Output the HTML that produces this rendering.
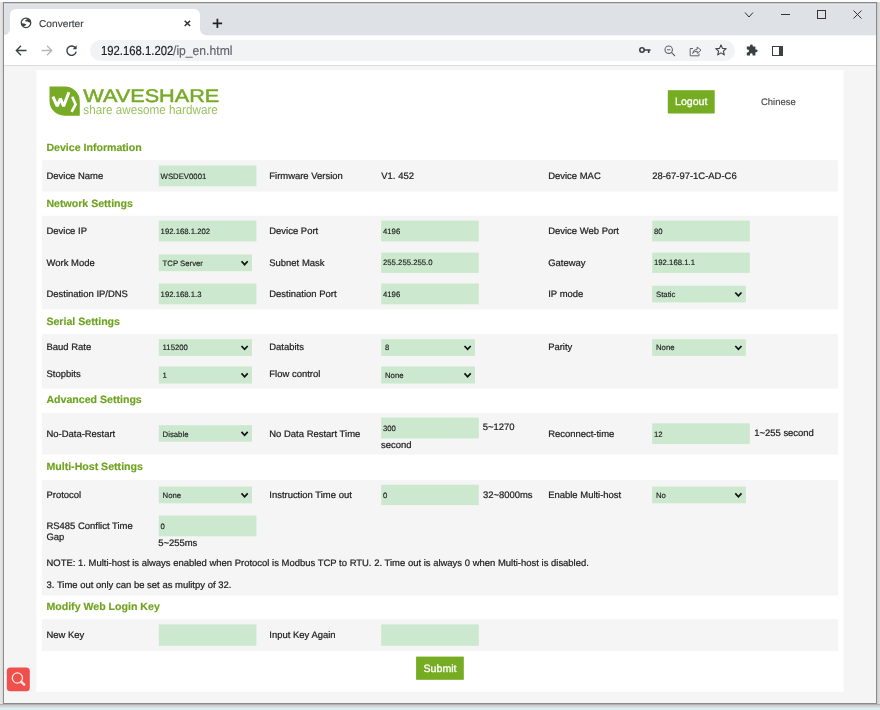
<!DOCTYPE html>
<html><head><meta charset="utf-8"><title>Converter</title>
<style>
html,body{margin:0;padding:0}
body{will-change:transform;text-rendering:geometricPrecision;width:880px;height:710px;position:relative;overflow:hidden;background:#ececee;font-family:"Liberation Sans",sans-serif;}
div,span{box-sizing:border-box}
.a{position:absolute;white-space:nowrap}
#desk-t{left:0;top:0;width:880px;height:2px;background:#fbfbfb}
#desk-l{left:0;top:2px;width:3px;height:702px;background:linear-gradient(to right,#e8e8e8,#d8d8d8)}
#desk-b{left:0;top:704px;width:880px;height:6px;background:linear-gradient(#b2aeb2 0,#b2aeb2 16.6%,#cdcdd1 16.7%,#cdcdd1 33.3%,#d2d4d8 33.4%,#d2d4d8 50%,#d8e4e8 50.1%,#d8e4e8 66.6%,#dceef2 66.7%,#dceef2 100%)}
#desk-r{left:877px;top:2px;width:3px;height:702px;background:linear-gradient(to right,#cacaca,#e0e0e0)}
#win{left:3px;top:2px;width:874px;height:702px;border:1px solid #8a8a8b;background:#f5f5f5;overflow:hidden}
#tabbar{left:4px;top:3px;width:872px;height:32px;background:linear-gradient(#c9cbcf 0,#c9cbcf 1px,#e7e8ec 1px,#e7e8ec 2px,#dee1e6 2px)}
#tabhalf{left:4px;top:35px;width:872px;height:1px;background:#f4f5f6}
.flare{width:6px;height:7px;top:29px;background:#fff}
.flare i{display:block;width:6px;height:6px;background:#dee1e6}
#tab{left:10px;top:8.5px;width:190px;height:27px;background:#fff;border-radius:6px 6px 0 0}
#toolbar{left:4px;top:36px;width:872px;height:29px;background:#fff}
#tbline{left:4px;top:65px;width:872px;height:1px;background:#dcdcdc}
#pill{left:90px;top:40px;width:645px;height:21px;border-radius:11px;background:#f1f3f4}
#bg{left:0;top:0}
.h{font-weight:bold;font-size:10.6px;line-height:14px;height:14px;color:#6fa31f;-webkit-text-stroke:0.15px #6fa31f}
.l{font-size:9.45px;line-height:12px;height:12px;word-spacing:0.07px;color:#222;-webkit-text-stroke:0.22px #222}
.t{font-size:7.75px;line-height:21px;height:21px;color:#1c1c1c;-webkit-text-stroke:0.15px #1c1c1c}
.btn{color:#fff;text-align:center;-webkit-text-stroke:0.3px #fff}
svg{display:block}
</style></head><body>

<div class="a" id="desk-t"></div><div class="a" id="desk-l"></div><div class="a" id="desk-b"></div><div class="a" id="desk-r"></div>
<div class="a" id="win"></div>
<div class="a" id="tabbar"></div><div class="a" id="tabhalf"></div><div class="a flare" style="left:4px"><i style="border-bottom-right-radius:6px"></i></div><div class="a flare" style="left:200px"><i style="border-bottom-left-radius:6px"></i></div><div class="a" id="tab"></div><div class="a" id="toolbar"></div><div class="a" id="tbline"></div><div class="a" id="pill"></div>
<svg class="a" style="left:20px;top:17px" width="12" height="12" viewBox="0 0 12 12"><defs><clipPath id="gc"><circle cx="6" cy="5.8" r="4.9"/></clipPath></defs><circle cx="6" cy="5.8" r="4.75" fill="#fff" stroke="#3c4043" stroke-width="1.25"/><g clip-path="url(#gc)" fill="#3c4043"><path d="M5.2 3.2L7 2.2L11 1.5V5.6L9 5.4L7.6 4.6L5.6 4.4Z"/><path d="M1 6.2L4.2 6.4L6.4 7.6L5.4 8.6L3.6 9.6L1 8.6Z"/></g></svg>
<div class="a" id="tabtitle" style="left:39px;top:18px;font-size:9.9px;line-height:14px;color:#3c4043;-webkit-text-stroke:0.15px #3c4043;transform:scaleX(1.03);transform-origin:0 50%">Converter</div>
<svg class="a" style="left:183px;top:18.5px" width="9" height="9" viewBox="0 0 9 9"><path d="M1.7 1.7L7.1 7.1M7.1 1.7L1.7 7.1" stroke="#2d3033" stroke-width="1.45" fill="none"/></svg>
<svg class="a" style="left:212px;top:17.5px" width="11" height="11" viewBox="0 0 11 11"><path d="M5.4 0.8V10M0.7 5.4H10.1" stroke="#202124" stroke-width="1.7" fill="none"/></svg>
<svg class="a" style="left:744px;top:11.5px" width="10" height="6" viewBox="0 0 10 6"><path d="M1 0.5L5 5L9 0.5" stroke="#333" stroke-width="1" fill="none"/></svg>
<div class="a" style="left:781px;top:14px;width:8.5px;height:1px;background:#333"></div>
<div class="a" style="left:817px;top:10px;width:9px;height:8.5px;border:1px solid #333"></div>
<svg class="a" style="left:853px;top:10px" width="9" height="9" viewBox="0 0 9 9"><path d="M0.5 0.5L8.5 8.5M8.5 0.5L0.5 8.5" stroke="#333" stroke-width="1" fill="none"/></svg>
<svg class="a" style="left:15px;top:45px" width="12" height="11" viewBox="0 0 12 11"><path d="M11.5 5.5H1.5M6 0.8L1.3 5.5L6 10.2" stroke="#3c4043" stroke-width="1.3" fill="none"/></svg>
<svg class="a" style="left:41px;top:45px" width="12" height="11" viewBox="0 0 12 11"><path d="M0.5 5.5H10.5M6 0.8L10.7 5.5L6 10.2" stroke="#b4b7ba" stroke-width="1.3" fill="none"/></svg>
<svg class="a" style="left:65px;top:44px" width="13" height="13" viewBox="0 0 13 13"><path d="M10.6 4.2A4.7 4.7 0 1 0 11.2 7.6" stroke="#3c4043" stroke-width="1.4" fill="none"/><path d="M11.6 1.2V5.2H7.6Z" fill="#3c4043"/></svg>
<div class="a" id="url" style="left:101px;top:42px;font-size:13px;line-height:17px;color:#202124;-webkit-text-stroke:0.2px #202124;transform:scaleX(.869);transform-origin:0 50%">192.168.1.202</div>
<div class="a" id="url2" style="left:172.6px;top:42px;font-size:13px;line-height:17px;color:#5f6368;-webkit-text-stroke:0.15px #5f6368;transform:scaleX(.935);transform-origin:0 50%">/ip_en.html</div>
<svg class="a" style="left:639px;top:46px" width="12" height="9" viewBox="0 0 12 9"><circle cx="3" cy="4" r="2.2" fill="none" stroke="#3c4043" stroke-width="1.6"/><path d="M5 4H11.5M9.7 4V7" stroke="#3c4043" stroke-width="1.7" fill="none"/></svg>
<svg class="a" style="left:664px;top:45px" width="12" height="12" viewBox="0 0 12 12"><circle cx="4.7" cy="4.7" r="3.7" fill="none" stroke="#5f6368" stroke-width="1.1"/><path d="M7.4 7.4L11 11M3 4.7H6.4" stroke="#5f6368" stroke-width="1.1" fill="none"/></svg>
<svg class="a" style="left:689px;top:44px" width="13" height="13" viewBox="0 0 13 13"><path d="M4 4.5H1.2V11.8H10V9.5" stroke="#5f6368" stroke-width="1" fill="none"/><path d="M3.6 9.4Q4 5.4 8.2 5.2V3L12 6.2L8.2 9.4V7.2Q5.6 7 3.6 9.4Z" stroke="#5f6368" stroke-width="1" fill="none" stroke-linejoin="round"/></svg>
<svg class="a" style="left:715px;top:44px" width="12" height="12" viewBox="0 0 12 12"><path d="M6 0.9L7.5 4.4L11.3 4.7L8.4 7.2L9.3 10.9L6 8.9L2.7 10.9L3.6 7.2L0.7 4.7L4.5 4.4Z" stroke="#3c4043" stroke-width="1.1" fill="none" stroke-linejoin="round"/></svg>
<svg class="a" style="left:745px;top:44px" width="13" height="13" viewBox="0 0 13 13"><path d="M5 1.8A1.4 1.4 0 0 1 7.8 1.8V2.6H10.4V5.4H11.2A1.4 1.4 0 0 1 11.2 8.2H10.4V11.4H7.6V10.6A1.3 1.3 0 0 0 5 10.6V11.4H1.8V8.4H2.6A1.3 1.3 0 0 0 2.6 5.6H1.8V2.6H5Z" fill="#3c4043"/></svg>
<div class="a" style="left:772px;top:46px;width:11px;height:10px;border:1.5px solid #3c4043;border-right-width:4.5px"></div>
<svg class="a" id="bg" width="880" height="710" viewBox="0 0 880 710">
<rect x="36.2" y="70.1" width="807.4" height="621.7" fill="#fff"/>
<rect x="667.8" y="90.2" width="46.9" height="23.3" fill="#76ac21"/>
<rect x="42" y="160.10" width="796" height="31.50" fill="#f5f5f5"/>
<rect x="158.8" y="165.50" width="97.6" height="20.80" fill="#cce8ce"/>
<rect x="42" y="215.80" width="796" height="93.60" fill="#f5f5f5"/>
<rect x="158.8" y="220.60" width="97.6" height="20.80" fill="#cce8ce"/>
<rect x="381.2" y="220.60" width="97.6" height="20.80" fill="#cce8ce"/>
<rect x="652.2" y="220.60" width="97.6" height="20.80" fill="#cce8ce"/>
<rect x="158.8" y="254.50" width="93.2" height="16.70" fill="#cce8ce"/>
<path d="M241.50 261.25L244.60 264.65L247.70 261.25" stroke="#111" stroke-width="1.7" fill="none"/>
<rect x="381.2" y="252.60" width="97.6" height="20.30" fill="#cce8ce"/>
<rect x="652.2" y="252.60" width="97.6" height="20.30" fill="#cce8ce"/>
<rect x="158.8" y="283.50" width="97.6" height="20.80" fill="#cce8ce"/>
<rect x="381.2" y="283.50" width="97.6" height="20.80" fill="#cce8ce"/>
<rect x="652.2" y="285.70" width="93.6" height="16.70" fill="#cce8ce"/>
<path d="M735.30 292.45L738.40 295.85L741.50 292.45" stroke="#111" stroke-width="1.7" fill="none"/>
<rect x="42" y="334.10" width="796" height="54.50" fill="#f5f5f5"/>
<rect x="158.8" y="339.20" width="93.2" height="16.70" fill="#cce8ce"/>
<path d="M241.50 345.95L244.60 349.35L247.70 345.95" stroke="#111" stroke-width="1.7" fill="none"/>
<rect x="381.2" y="339.20" width="93.8" height="16.70" fill="#cce8ce"/>
<path d="M464.50 345.95L467.60 349.35L470.70 345.95" stroke="#111" stroke-width="1.7" fill="none"/>
<rect x="652.2" y="339.20" width="93.6" height="16.70" fill="#cce8ce"/>
<path d="M735.30 345.95L738.40 349.35L741.50 345.95" stroke="#111" stroke-width="1.7" fill="none"/>
<rect x="158.8" y="366.50" width="93.2" height="17.00" fill="#cce8ce"/>
<path d="M241.50 373.40L244.60 376.80L247.70 373.40" stroke="#111" stroke-width="1.7" fill="none"/>
<rect x="381.2" y="366.50" width="93.8" height="17.00" fill="#cce8ce"/>
<path d="M464.50 373.40L467.60 376.80L470.70 373.40" stroke="#111" stroke-width="1.7" fill="none"/>
<rect x="42" y="413.00" width="796" height="41.60" fill="#f5f5f5"/>
<rect x="158.8" y="425.20" width="93.2" height="16.50" fill="#cce8ce"/>
<path d="M241.50 431.85L244.60 435.25L247.70 431.85" stroke="#111" stroke-width="1.7" fill="none"/>
<rect x="381.2" y="417.60" width="97.6" height="20.80" fill="#cce8ce"/>
<rect x="652.2" y="423.30" width="97.6" height="20.80" fill="#cce8ce"/>
<rect x="42" y="479.90" width="796" height="115.70" fill="#f5f5f5"/>
<rect x="158.8" y="486.60" width="93.2" height="16.70" fill="#cce8ce"/>
<path d="M241.50 493.35L244.60 496.75L247.70 493.35" stroke="#111" stroke-width="1.7" fill="none"/>
<rect x="381.2" y="484.70" width="97.6" height="20.40" fill="#cce8ce"/>
<rect x="652.2" y="486.60" width="93.6" height="16.70" fill="#cce8ce"/>
<path d="M735.30 493.35L738.40 496.75L741.50 493.35" stroke="#111" stroke-width="1.7" fill="none"/>
<rect x="158.8" y="515.50" width="97.6" height="20.80" fill="#cce8ce"/>
<rect x="42" y="619.20" width="796" height="31.80" fill="#f5f5f5"/>
<rect x="158.8" y="624.40" width="97.6" height="21.40" fill="#cce8ce"/>
<rect x="381.2" y="624.40" width="97.6" height="21.40" fill="#cce8ce"/>
<rect x="416.1" y="656.6" width="47.7" height="23.2" fill="#76ac21"/>
</svg>
<svg class="a" id="logo" style="left:49px;top:86px" width="174" height="32" viewBox="0 0 174 32">
<path d="M0.5 0.4H15.8A15 15 0 0 1 30.8 15.4V29.7H15.5A15 15 0 0 1 0.5 14.7Z" fill="#77ab26"/>
<path d="M3.9 10.6L8.2 20.2L11.4 12.6L14.6 20.2L19.9 6.2" stroke="#fff" stroke-width="3" fill="none" stroke-linejoin="miter" stroke-miterlimit="2" stroke-linecap="butt"/>
<path d="M23.2 10.8L26.6 18.4L22.6 25.8" stroke="#fff" stroke-width="2.6" fill="none" stroke-linejoin="miter"/>
<text id="ws1" x="34.3" y="15.8" font-family="Liberation Sans, sans-serif" font-size="18.2" fill="#77ab26" stroke="#77ab26" stroke-width="0.5" textLength="136" lengthAdjust="spacingAndGlyphs">WAVESHARE</text>
<text id="ws2" x="34.3" y="27.7" font-family="Liberation Sans, sans-serif" font-size="12.8" fill="#77ab26" fill-opacity="0.75" textLength="134.5" lengthAdjust="spacingAndGlyphs">share awesome hardware</text>
</svg>
<div class="a btn" id="logout" style="left:667.8px;top:95px;width:46.9px;height:14px;font-size:10.6px;line-height:14px">Logout</div>
<div class="a l" id="chinese" style="left:761px;top:97px;color:#4a4a4a;-webkit-text-stroke:0.15px #4a4a4a">Chinese</div>
<div class="a h m" style="left:46.4px;top:141px">Device Information</div>
<div class="a l m" style="left:46.5px;top:171px">Device Name</div>
<div class="a t" style="left:160.6px;top:166px">WSDEV0001</div>
<div class="a l m" style="left:269.3px;top:171px">Firmware Version</div>
<div class="a l m" style="left:381.3px;top:171px">V1. 452</div>
<div class="a l m" style="left:548.2px;top:171px">Device MAC</div>
<div class="a l m" style="left:652.2px;top:171px">28-67-97-1C-AD-C6</div>
<div class="a h m" style="left:46.4px;top:197px">Network Settings</div>
<div class="a l m" style="left:46.5px;top:226px">Device IP</div>
<div class="a t" style="left:160.6px;top:221px">192.168.1.202</div>
<div class="a l m" style="left:269.3px;top:226px">Device Port</div>
<div class="a t" style="left:383.0px;top:221px">4196</div>
<div class="a l m" style="left:548.2px;top:226px">Device Web Port</div>
<div class="a t" style="left:654.0px;top:221px">80</div>
<div class="a l m" style="left:46.5px;top:258px">Work Mode</div>
<div class="a t" style="left:162.6px;top:253px">TCP Server</div>
<div class="a l m" style="left:269.3px;top:258px">Subnet Mask</div>
<div class="a t" style="left:383.0px;top:252px">255.255.255.0</div>
<div class="a l m" style="left:548.2px;top:258px">Gateway</div>
<div class="a t" style="left:654.0px;top:252px">192.168.1.1</div>
<div class="a l m" style="left:46.5px;top:289px">Destination IP/DNS</div>
<div class="a t" style="left:160.6px;top:284px">192.168.1.3</div>
<div class="a l m" style="left:269.3px;top:289px">Destination Port</div>
<div class="a t" style="left:383.0px;top:284px">4196</div>
<div class="a l m" style="left:548.2px;top:289px">IP mode</div>
<div class="a t" style="left:656.0px;top:284px">Static</div>
<div class="a h m" style="left:46.4px;top:315px">Serial Settings</div>
<div class="a l m" style="left:46.5px;top:342px">Baud Rate</div>
<div class="a t" style="left:162.6px;top:337px">115200</div>
<div class="a l m" style="left:269.3px;top:342px">Databits</div>
<div class="a t" style="left:385.0px;top:337px">8</div>
<div class="a l m" style="left:548.2px;top:342px">Parity</div>
<div class="a t" style="left:656.0px;top:337px">None</div>
<div class="a l m" style="left:46.5px;top:369px">Stopbits</div>
<div class="a t" style="left:162.6px;top:365px">1</div>
<div class="a l m" style="left:269.3px;top:369px">Flow control</div>
<div class="a t" style="left:385.0px;top:365px">None</div>
<div class="a h m" style="left:46.4px;top:393px">Advanced Settings</div>
<div class="a l m" style="left:46.5px;top:429px">No-Data-Restart</div>
<div class="a t" style="left:162.6px;top:424px">Disable</div>
<div class="a l m" style="left:269.3px;top:429px">No Data Restart Time</div>
<div class="a t" style="left:383.0px;top:418px">300</div>
<div class="a l m" style="left:482.8px;top:422px">5~1270</div>
<div class="a l m" style="left:381.0px;top:440px">second</div>
<div class="a l m" style="left:548.2px;top:429px">Reconnect-time</div>
<div class="a t" style="left:654.0px;top:424px">12</div>
<div class="a l m" style="left:754.2px;top:428px">1~255 second</div>
<div class="a h m" style="left:46.4px;top:460px">Multi-Host Settings</div>
<div class="a l m" style="left:46.5px;top:490px">Protocol</div>
<div class="a t" style="left:162.6px;top:485px">None</div>
<div class="a l m" style="left:269.3px;top:490px">Instruction Time out</div>
<div class="a t" style="left:383.0px;top:485px">0</div>
<div class="a l m" style="left:483.0px;top:490px">32~8000ms</div>
<div class="a l m" style="left:548.2px;top:490px">Enable Multi-host</div>
<div class="a t" style="left:656.0px;top:485px">No</div>
<div class="a l m" style="left:46.5px;top:521px">RS485 Conflict Time</div>
<div class="a l m" style="left:46.5px;top:532px">Gap</div>
<div class="a t" style="left:160.6px;top:516px">0</div>
<div class="a l m" style="left:158.2px;top:538px">5~255ms</div>
<div class="a l m" style="left:46.5px;top:558px">NOTE: 1. Multi-host is always enabled when Protocol is Modbus TCP to RTU. 2. Time out is always 0 when Multi-host is disabled.</div>
<div class="a l m" style="left:46.5px;top:580px">3. Time out only can be set as mulitpy of 32.</div>
<div class="a h m" style="left:46.4px;top:600px">Modify Web Login Key</div>
<div class="a l m" style="left:46.5px;top:630px">New Key</div>
<div class="a l m" style="left:269.3px;top:630px">Input Key Again</div>
<div class="a btn" id="submit" style="left:416.3px;top:662px;width:47.5px;height:14px;font-size:10.6px;line-height:14px">Submit</div>
<svg class="a" style="left:6px;top:666px" width="26" height="27" viewBox="0 0 26 27"><rect x="0.8" y="1.5" width="23" height="23.8" rx="3.6" fill="#ef504c"/><circle cx="11.4" cy="12" r="5.1" fill="none" stroke="#fde9e0" stroke-width="1.3"/><path d="M15.3 15.8L18.2 18.6" stroke="#fde9e0" stroke-width="2.4" stroke-linecap="round"/></svg>
</body></html>
